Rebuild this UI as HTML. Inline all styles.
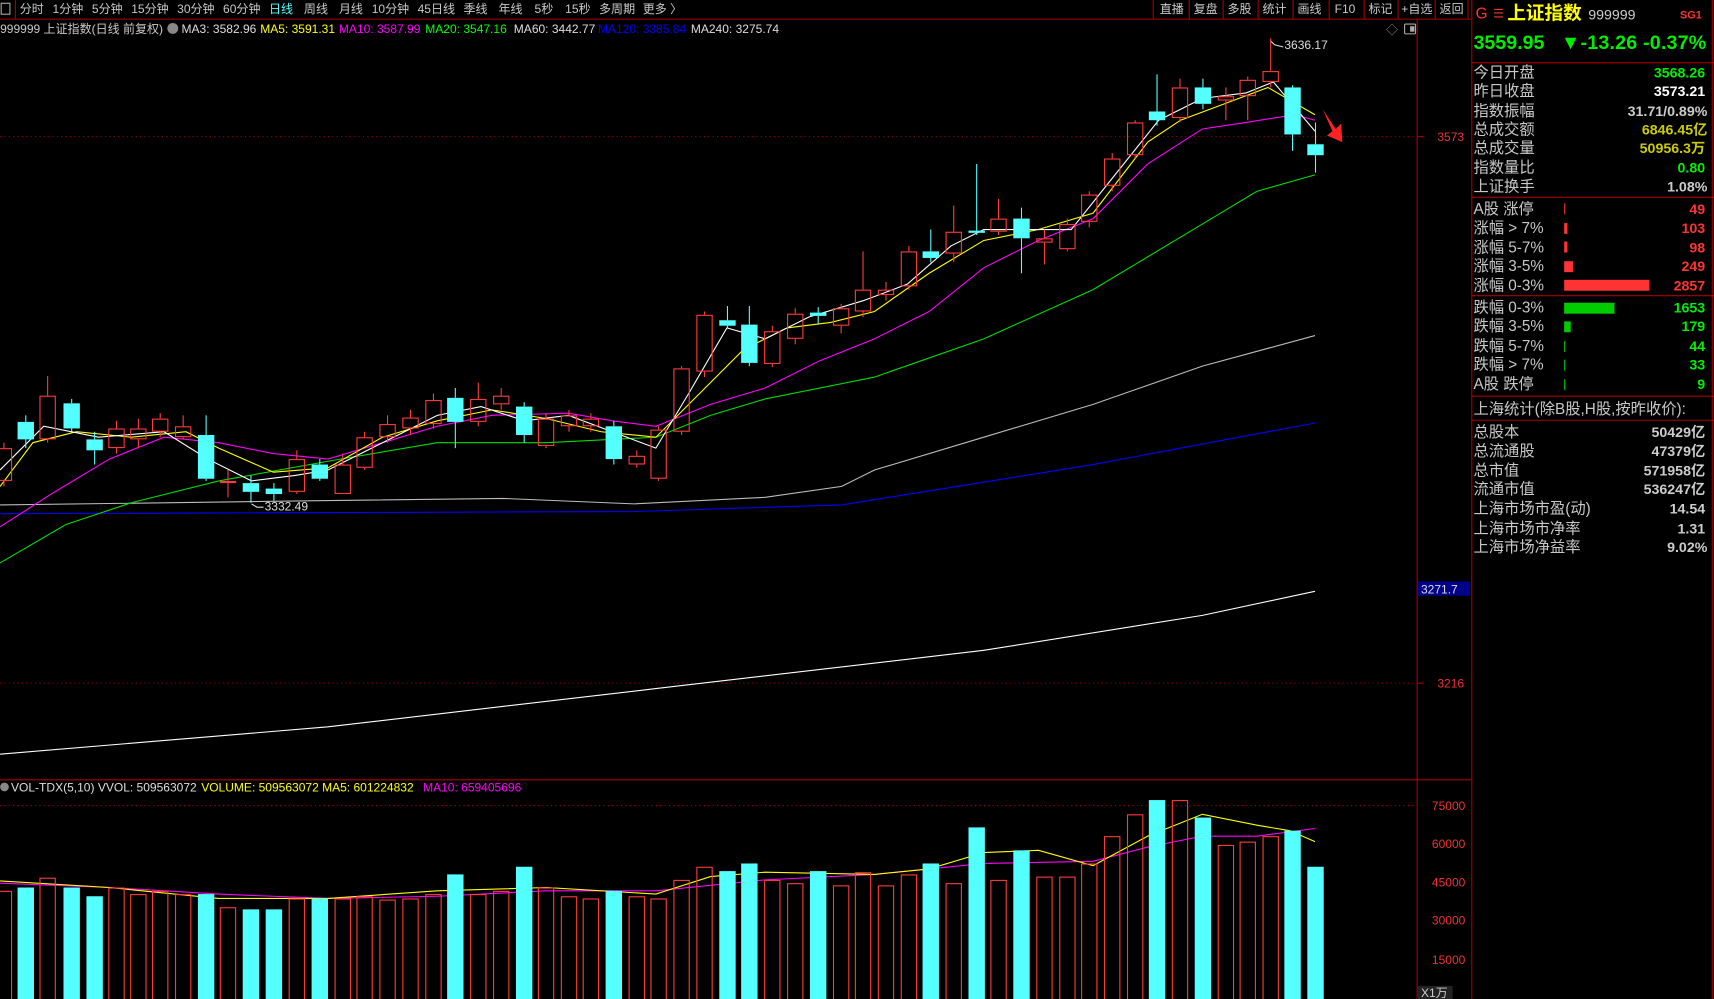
<!DOCTYPE html>
<html><head><meta charset="utf-8"><style>
html,body{margin:0;padding:0;background:#000;overflow:hidden}
svg{display:block}
text{font-family:"Liberation Sans","Noto Sans CJK SC",sans-serif;font-size:11px}
.p text{font-size:14px}
</style></head><body>
<svg id="s" width="1714" height="999" viewBox="0 0 1568 914" xmlns="http://www.w3.org/2000/svg">
<rect width="1568" height="914" fill="#000"/>
<g fill="#c8c8c8">
<rect x="1" y="3" width="8" height="10" fill="none" stroke="#aaa"/>
<text x="18" y="12">分时</text><text x="48" y="12">1分钟</text><text x="84" y="12">5分钟</text><text x="120" y="12">15分钟</text><text x="162" y="12">30分钟</text><text x="204" y="12">60分钟</text>
<text x="246" y="12" fill="#5ff">日线</text><text x="278" y="12">周线</text><text x="310" y="12">月线</text><text x="340" y="12">10分钟</text><text x="382" y="12">45日线</text><text x="424" y="12">季线</text><text x="456" y="12">年线</text><text x="489" y="12">5秒</text><text x="517" y="12">15秒</text><text x="548" y="12">多周期</text><text x="588" y="12">更多 〉</text>
<text x="1061" y="12">直播</text><text x="1092" y="12">复盘</text><text x="1123" y="12">多股</text><text x="1155" y="12">统计</text><text x="1187" y="12">画线</text><text x="1221" y="12">F10</text><text x="1252" y="12">标记</text><text x="1282" y="12">+自选</text><text x="1317" y="12">返回</text>
</g>
<g stroke="#a00" stroke-width="1">
<line x1="14" y1="0" x2="14" y2="17"/>
<line x1="1055" y1="0" x2="1055" y2="17"/><line x1="1088" y1="0" x2="1088" y2="17"/><line x1="1119" y1="0" x2="1119" y2="17"/><line x1="1151" y1="0" x2="1151" y2="17"/><line x1="1183" y1="0" x2="1183" y2="17"/><line x1="1216" y1="0" x2="1216" y2="17"/><line x1="1248" y1="0" x2="1248" y2="17"/><line x1="1279" y1="0" x2="1279" y2="17"/><line x1="1313" y1="0" x2="1313" y2="17"/><line x1="1343" y1="0" x2="1343" y2="17"/>
<line x1="0" y1="17.5" x2="1346" y2="17.5"/>
<line x1="1296.5" y1="17" x2="1296.5" y2="914"/>
<line x1="1346.5" y1="0" x2="1346.5" y2="914"/>
<line x1="0" y1="713.5" x2="1346" y2="713.5"/>
</g>
<g stroke="#a00" stroke-dasharray="1,3">
<line x1="0" y1="125" x2="1296" y2="125"/><line x1="0" y1="625" x2="1296" y2="625"/><line x1="0" y1="737" x2="1296" y2="737"/>
</g>
<g stroke="#a00"><line x1="1296" y1="125" x2="1302" y2="125"/><line x1="1296" y1="625" x2="1302" y2="625"/></g>
<g fill="#e33"><text x="1315" y="129">3573</text><text x="1315" y="629">3216</text>
<text x="1310" y="741">75000</text><text x="1310" y="776">60000</text><text x="1310" y="811">45000</text><text x="1310" y="846">30000</text><text x="1310" y="882">15000</text></g>
<rect x="1297" y="532" width="48" height="13" fill="#00008b"/><text x="1300" y="543" fill="#ddd">3271.7</text>
<rect x="1297" y="902" width="32" height="12" fill="#222"/><text x="1300" y="912" fill="#ccc" font-size="10">X1万</text>
<text x="0" y="30" fill="#c8c8c8">999999 上证指数(日线 前复权)</text>
<circle cx="158" cy="26" r="5" fill="#888"/>
<text x="166" y="30" fill="#ddd">MA3: 3582.96</text><text x="238" y="30" fill="#ff0">MA5: 3591.31</text><text x="310" y="30" fill="#f0f">MA10: 3587.99</text><text x="389" y="30" fill="#0f0">MA20: 3547.16</text><text x="470" y="30" fill="#ddd">MA60: 3442.77</text><text x="547" y="30" fill="#0000ff">MA120: 3385.84</text><text x="632" y="30" fill="#ddd">MA240: 3275.74</text>
<text x="1268" y="31" fill="#888">◇</text><rect x="1285" y="22" width="10" height="9" fill="none" stroke="#aaa" rx="1"/><rect x="1290" y="24" width="4" height="5" fill="#aaa"/>
<circle cx="4" cy="720" r="4" fill="#888"/>
<text x="10" y="724" fill="#ddd">VOL-TDX(5,10)  VVOL: 509563072</text><text x="184" y="724" fill="#ff0">VOLUME: 509563072  MA5: 601224832</text><text x="387" y="724" fill="#f0f">MA10: 659405696</text>
<text x="1175" y="45" fill="#ddd">3636.17</text><path d="M1162 37 l4 4 l8 2" fill="none" stroke="#ddd"/>
<text x="242" y="467" fill="#ddd">3332.49</text><path d="M230 461 l5 3 l6 0" fill="none" stroke="#ddd"/>
<g id="ma" fill="none" stroke-width="1"></g>
<g id="c"></g>
<g id="v"></g>
<polygon points="1210,100 1222,118 1227,113 1228,130 1214,124 1219,120" fill="#f22"/>
<g class="p">
<text x="1350" y="17" fill="#f33" font-size="13">G</text><text x="1366" y="16" fill="#f33" style="font-size:11px">☰</text>
<text x="1379" y="18" fill="#ff0" style="font-size:17px" font-weight="bold" textLength="68">上证指数</text><text x="1453" y="18" fill="#ccc" style="font-size:13px">999999</text><text x="1537" y="17" fill="#f33" style="font-size:10px" font-weight="bold">SG1</text>
<text x="1348" y="45" fill="#0e0" style="font-size:18px" font-weight="bold" textLength="65">3559.95</text><text x="1428" y="45" fill="#0e0" style="font-size:18px" font-weight="bold" textLength="133">▼-13.26  -0.37%</text>
<g fill="#c8c8c8">
<text x="1348" y="71">今日开盘</text><text x="1348" y="88">昨日收盘</text><text x="1348" y="106">指数振幅</text><text x="1348" y="123">总成交额</text><text x="1348" y="140">总成交量</text><text x="1348" y="158">指数量比</text><text x="1348" y="175">上证换手</text>
<text x="1348" y="196">A股 涨停</text><text x="1348" y="213">涨幅 &gt; 7%</text><text x="1348" y="231">涨幅 5-7%</text><text x="1348" y="248">涨幅 3-5%</text><text x="1348" y="266">涨幅 0-3%</text>
<text x="1348" y="286">跌幅 0-3%</text><text x="1348" y="303">跌幅 3-5%</text><text x="1348" y="321">跌幅 5-7%</text><text x="1348" y="338">跌幅 &gt; 7%</text><text x="1348" y="356">A股 跌停</text>
<text x="1348" y="379">上海统计(除B股,H股,按昨收价):</text>
<text x="1348" y="400">总股本</text><text x="1348" y="417">总流通股</text><text x="1348" y="435">总市值</text><text x="1348" y="452">流通市值</text><text x="1348" y="470">上海市场市盈(动)</text><text x="1348" y="488">上海市场市净率</text><text x="1348" y="505">上海市场净益率</text>
</g>
<g text-anchor="end" font-weight="bold">
<text x="1560" y="71" fill="#0e0" style="font-size:13px">3568.26</text><text x="1560" y="88" fill="#fff" style="font-size:13px">3573.21</text><text x="1562" y="106" fill="#ccc" style="font-size:13px">31.71/0.89%</text><text x="1562" y="123" fill="#cc0" style="font-size:13px">6846.45亿</text><text x="1560" y="140" fill="#cc0" style="font-size:13px">50956.3万</text><text x="1560" y="158" fill="#0e0" style="font-size:13px">0.80</text><text x="1562" y="175" fill="#ccc" style="font-size:13px">1.08%</text>
<text x="1560" y="196" fill="#f33" style="font-size:13px">49</text><text x="1560" y="213" fill="#f33" style="font-size:13px">103</text><text x="1560" y="231" fill="#f33" style="font-size:13px">98</text><text x="1560" y="248" fill="#f33" style="font-size:13px">249</text><text x="1560" y="266" fill="#f33" style="font-size:13px">2857</text>
<text x="1560" y="286" fill="#0e0" style="font-size:13px">1653</text><text x="1560" y="303" fill="#0e0" style="font-size:13px">179</text><text x="1560" y="321" fill="#0e0" style="font-size:13px">44</text><text x="1560" y="338" fill="#0e0" style="font-size:13px">33</text><text x="1560" y="356" fill="#0e0" style="font-size:13px">9</text>
<text x="1560" y="400" fill="#ccc" style="font-size:13px">50429亿</text><text x="1560" y="417" fill="#ccc" style="font-size:13px">47379亿</text><text x="1560" y="435" fill="#ccc" style="font-size:13px">571958亿</text><text x="1560" y="452" fill="#ccc" style="font-size:13px">536247亿</text><text x="1560" y="470" fill="#ccc" style="font-size:13px">14.54</text><text x="1560" y="488" fill="#ccc" style="font-size:13px">1.31</text><text x="1562" y="505" fill="#ccc" style="font-size:13px">9.02%</text>
</g>
<g fill="#f33"><rect x="1431" y="186" width="1" height="10"/><rect x="1431" y="204" width="3" height="10"/><rect x="1431" y="221" width="3" height="10"/><rect x="1431" y="239" width="8" height="10"/><rect x="1431" y="256" width="78" height="10"/></g>
<g fill="#0c0"><rect x="1431" y="277" width="46" height="10"/><rect x="1431" y="294" width="6" height="10"/><rect x="1431" y="312" width="1" height="10"/><rect x="1431" y="329" width="1" height="10"/><rect x="1431" y="347" width="1" height="10"/></g>
<g stroke="#a00"><line x1="1346" y1="57.5" x2="1568" y2="57.5"/><line x1="1346" y1="180.5" x2="1568" y2="180.5"/><line x1="1346" y1="270.5" x2="1568" y2="270.5"/><line x1="1346" y1="362.5" x2="1568" y2="362.5"/><line x1="1346" y1="384.5" x2="1568" y2="384.5"/><line x1="1566.5" y1="0" x2="1566.5" y2="914"/></g>
</g>
</svg>
<script>
var NS="http://www.w3.org/2000/svg";
function el(p,t,a){var e=document.createElementNS(NS,t);for(var k in a)e.setAttribute(k,a[k]);p.appendChild(e);return e;}
var C=[[3,0,410,440,405,445],[23,1,386,402,380,410],[43,0,362,402,344,405],[65,1,369,392,365,395],[86,1,402,412,395,425],[106,0,392,410,385,415],[126,0,392,402,383,410],[146,0,383,395,378,400],[167,0,390,400,380,402],[188,1,398,438,380,440],[208,0,440,442,430,455],[229,1,442,450,435,460],[250,1,447,452,442,458],[271,0,420,450,412,452],[292,1,425,438,420,440],[313,0,425,452,415,452],[333,0,400,428,395,430],[354,0,388,400,380,405],[375,0,382,392,375,398],[396,0,366,388,360,392],[416,1,364,386,355,410],[437,0,365,386,350,390],[458,0,362,370,355,375],[479,1,372,398,368,405],[499,0,383,408,378,410],[520,0,380,390,375,395],[540,0,383,390,378,395],[561,1,390,420,385,425],[582,0,417,425,412,428],[602,0,393,438,390,440],[623,0,337,395,335,398],[644,0,288,340,285,345],[665,1,293,298,280,300],[685,1,297,332,280,335],[706,0,303,333,298,336],[727,0,287,310,282,315],[748,1,286,289,281,296],[769,0,282,298,278,305],[789,0,265,285,230,290],[810,0,265,270,258,275],[831,0,230,262,225,265],[851,1,230,236,210,240],[872,0,212,232,188,240],[893,1,211,213,150,215],[913,0,200,212,182,215],[934,1,200,218,190,250],[955,0,218,222,210,242],[976,0,205,228,200,230],[996,0,178,203,175,208],[1017,0,145,170,140,175],[1038,0,112,142,110,145],[1058,1,102,110,68,115],[1079,0,80,108,72,112],[1100,1,80,95,72,100],[1121,0,88,92,80,110],[1141,0,73,88,70,110],[1162,0,65,75,35,80],[1182,1,80,123,78,138],[1203,1,132,142,112,158]];
var V=[815,812,803,812,820,812,818,815,818,818,830,832,832,822,822,822,820,823,822,818,800,818,815,793,812,820,822,815,820,822,805,793,797,790,805,808,797,810,798,810,800,790,808,757,805,778,802,802,790,765,745,732,732,748,773,770,765,760,793];
var g=document.getElementById('c'),gv=document.getElementById('v');
C.forEach(function(c,i){var x=c[0],col=c[1]?'#54ffff':'#ff3c3c';
el(g,'line',{x1:x+.5,x2:x+.5,y1:c[4],y2:c[2],stroke:col});el(g,'line',{x1:x+.5,x2:x+.5,y1:c[3],y2:c[5],stroke:col});
var h=Math.max(1,c[3]-c[2]);
if(c[1])el(g,'rect',{x:x-7,y:c[2],width:15,height:h,fill:col});else el(g,'rect',{x:x-6.5,y:c[2]+.5,width:14,height:h-1<1?1:h-1,fill:'none',stroke:col});
var t=V[i];if(c[1])el(gv,'rect',{x:x-7,y:t,width:15,height:914-t,fill:col});else el(gv,'rect',{x:x-6.5,y:t+.5,width:14,height:914-t,fill:'none',stroke:col});
});
var M=[['#fff',"0,690 300,665 600,630 900,595 1100,563 1203,541"],
['#0000ff',"0,470 580,468 770,462 1000,425 1203,387"],
['#bbb',"0,462 300,458 460,456 580,461 700,455 770,445 800,430 900,400 1000,370 1100,335 1203,307"],
['#0d0',"0,515 60,480 120,460 200,440 300,422 400,405 500,405 600,400 650,380 700,365 800,345 900,310 1000,265 1050,235 1100,205 1150,175 1203,160"],
['#f0f',"0,482 50,450 100,420 150,400 200,405 250,415 300,420 350,405 400,390 450,380 520,378 560,385 600,390 650,370 700,355 750,330 800,310 850,285 900,245 950,220 1000,200 1050,150 1100,118 1140,112 1165,108 1185,105 1203,110"],
['#ff0',"0,445 30,405 70,395 120,400 170,395 200,410 250,432 300,428 350,400 400,385 450,375 500,383 550,395 600,400 640,360 680,320 720,300 760,295 800,285 850,250 900,220 950,210 1000,195 1050,130 1080,110 1120,95 1160,80 1203,105"],
['#fff',"0,430 40,390 90,400 150,395 190,420 230,440 270,435 300,430 340,410 400,380 440,372 480,385 520,380 560,395 600,410 630,360 665,300 700,310 740,290 790,275 830,260 870,225 900,210 940,210 980,210 1020,160 1060,110 1100,90 1140,85 1165,75 1203,120"],
['#f0f',"0,808 100,812 200,818 300,822 400,820 500,815 600,815 700,805 800,800 900,790 1000,788 1050,775 1100,765 1150,765 1203,758"],
['#ff0',"0,806 100,812 200,822 300,822 400,815 500,812 600,818 650,802 700,798 800,800 850,795 900,780 950,778 1000,792 1050,765 1100,745 1150,755 1180,760 1203,770"]];
var gm=document.getElementById('ma');
M.forEach(function(m){el(gm,'polyline',{points:m[1],stroke:m[0],fill:'none'});});
</script>
</body></html>
